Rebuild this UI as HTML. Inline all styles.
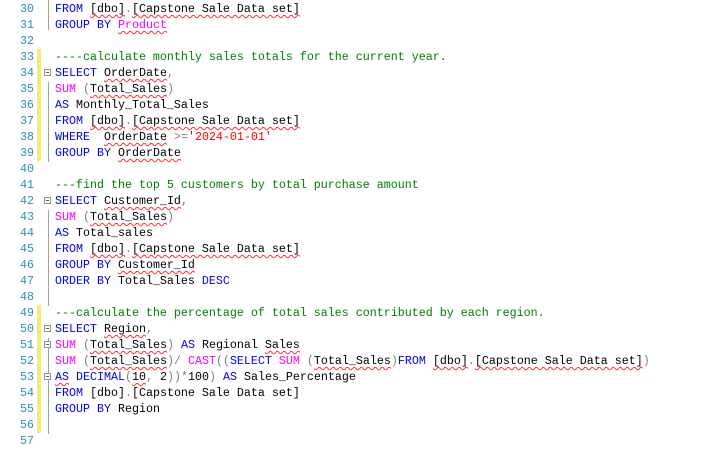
<!DOCTYPE html>
<html><head><meta charset="utf-8"><style>
body{margin:0;width:719px;height:452px;background:#fff;overflow:hidden;position:relative;font-family:"Liberation Mono",monospace;font-size:11.67px}
.l{position:absolute;left:0;height:16px;line-height:16px;white-space:pre;width:719px}
.n{position:absolute;right:685px;color:#2b91af;text-align:right}
.t{position:absolute;left:55px;color:#000}
.k{color:#0000ff}.f{color:#ff00ff}.c{color:#008000}.s{color:#ff0000}.g{color:#808080}
.w{text-decoration:underline wavy #ff3030;text-decoration-thickness:1px;text-underline-offset:2px}
.y{position:absolute;left:37px;width:4px;background:#f5ec6f}
.v{position:absolute;left:48px;width:1px;background:#a0a0a0}
.b{position:absolute;left:44px;width:7px;height:7px;border:1px solid #909090;background:#fff;box-sizing:border-box}
.b:after{content:"";position:absolute;left:1px;top:2px;width:3px;height:1px;background:#555}
</style></head><body>
<div class="y" style="top:49px;height:112px"></div>
<div class="y" style="top:305px;height:128px"></div>
<div class="v" style="top:0;height:30px"></div>
<div class="v" style="top:82px;height:80px"></div>
<div class="v" style="top:210px;height:96px"></div>
<div class="v" style="top:338px;height:96px"></div>
<div class="b" style="top:69px"></div>
<div class="b" style="top:197px"></div>
<div class="b" style="top:325px"></div>
<div class="b" style="top:341px"></div>
<div class="b" style="top:373px"></div>

<div class="l" style="top:1px"><span class="n">30</span><span class="t"><span class="k">FROM</span> <span class="w">[dbo]</span><span class="g">.</span><span class="w">[Capstone Sale Data set]</span></span></div>
<div class="l" style="top:17px"><span class="n">31</span><span class="t"><span class="k">GROUP BY</span> <span class="f w">Product</span></span></div>
<div class="l" style="top:33px"><span class="n">32</span></div>
<div class="l" style="top:49px"><span class="n">33</span><span class="t"><span class="c">----calculate monthly sales totals for the current year.</span></span></div>
<div class="l" style="top:65px"><span class="n">34</span><span class="t"><span class="k">SELECT</span> <span class="w">OrderDate</span><span class="g">,</span></span></div>
<div class="l" style="top:81px"><span class="n">35</span><span class="t"><span class="f">SUM</span> <span class="g">(</span><span class="w">Total_Sales</span><span class="g">)</span></span></div>
<div class="l" style="top:97px"><span class="n">36</span><span class="t"><span class="k">AS</span> Monthly_Total_Sales</span></div>
<div class="l" style="top:113px"><span class="n">37</span><span class="t"><span class="k">FROM</span> <span class="w">[dbo]</span><span class="g">.</span><span class="w">[Capstone Sale Data set]</span></span></div>
<div class="l" style="top:129px"><span class="n">38</span><span class="t"><span class="k">WHERE</span>  <span class="w">OrderDate</span> <span class="g">&gt;=</span><span class="s">'2024-01-01'</span></span></div>
<div class="l" style="top:145px"><span class="n">39</span><span class="t"><span class="k">GROUP BY</span> <span class="w">OrderDate</span></span></div>
<div class="l" style="top:161px"><span class="n">40</span></div>
<div class="l" style="top:177px"><span class="n">41</span><span class="t"><span class="c">---find the top 5 customers by total purchase amount</span></span></div>
<div class="l" style="top:193px"><span class="n">42</span><span class="t"><span class="k">SELECT</span> <span class="w">Customer_Id</span><span class="g">,</span></span></div>
<div class="l" style="top:209px"><span class="n">43</span><span class="t"><span class="f">SUM</span> <span class="g">(</span><span class="w">Total_Sales</span><span class="g">)</span></span></div>
<div class="l" style="top:225px"><span class="n">44</span><span class="t"><span class="k">AS</span> Total_sales</span></div>
<div class="l" style="top:241px"><span class="n">45</span><span class="t"><span class="k">FROM</span> <span class="w">[dbo]</span><span class="g">.</span><span class="w">[Capstone Sale Data set]</span></span></div>
<div class="l" style="top:257px"><span class="n">46</span><span class="t"><span class="k">GROUP BY</span> <span class="w">Customer_Id</span></span></div>
<div class="l" style="top:273px"><span class="n">47</span><span class="t"><span class="k">ORDER BY</span> Total_Sales <span class="k">DESC</span></span></div>
<div class="l" style="top:289px"><span class="n">48</span></div>
<div class="l" style="top:305px"><span class="n">49</span><span class="t"><span class="c">---calculate the percentage of total sales contributed by each region.</span></span></div>
<div class="l" style="top:321px"><span class="n">50</span><span class="t"><span class="k">SELECT</span> <span class="w">Region</span><span class="g">,</span></span></div>
<div class="l" style="top:337px"><span class="n">51</span><span class="t"><span class="f">SUM</span> <span class="g">(</span><span class="w">Total_Sales</span><span class="g">)</span> <span class="k">AS</span> Regional <span class="w">Sales</span></span></div>
<div class="l" style="top:353px"><span class="n">52</span><span class="t"><span class="f">SUM</span> <span class="g">(</span><span class="w">Total_Sales</span><span class="g">)/</span> <span class="f">CAST</span><span class="g">((</span><span class="k">SELECT</span> <span class="f">SUM</span> <span class="g">(</span><span class="w">Total_Sales</span><span class="g">)</span><span class="k">FROM</span> <span class="w">[dbo]</span><span class="g">.</span><span class="w">[Capstone Sale Data set]</span><span class="g">)</span></span></div>
<div class="l" style="top:369px"><span class="n">53</span><span class="t"><span class="k w">AS</span> <span class="k">DECIMAL</span><span class="g">(</span><span class="w">10</span><span class="g">,</span> 2<span class="g">))*</span>100<span class="g">)</span> <span class="k">AS</span> Sales_Percentage</span></div>
<div class="l" style="top:385px"><span class="n">54</span><span class="t"><span class="k">FROM</span> [dbo]<span class="g">.</span>[Capstone Sale Data set]</span></div>
<div class="l" style="top:401px"><span class="n">55</span><span class="t"><span class="k">GROUP BY</span> Region</span></div>
<div class="l" style="top:417px"><span class="n">56</span></div>
<div class="l" style="top:433px"><span class="n">57</span></div>
</body></html>
